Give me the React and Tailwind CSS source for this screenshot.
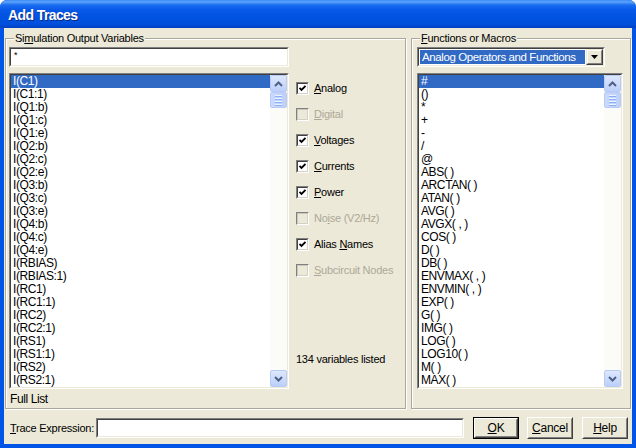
import React from "react";

const vars = [
  "I(C1)", "I(C1:1)", "I(Q1:b)", "I(Q1:c)", "I(Q1:e)", "I(Q2:b)", "I(Q2:c)", "I(Q2:e)",
  "I(Q3:b)", "I(Q3:c)", "I(Q3:e)", "I(Q4:b)", "I(Q4:c)", "I(Q4:e)", "I(RBIAS)", "I(RBIAS:1)",
  "I(RC1)", "I(RC1:1)", "I(RC2)", "I(RC2:1)", "I(RS1)", "I(RS1:1)", "I(RS2)", "I(RS2:1)",
];

const funcs = [
  "#", "()", "*", "+", "-", "/", "@", "ABS( )", "ARCTAN( )", "ATAN( )", "AVG( )", "AVGX( , )",
  "COS( )", "D( )", "DB( )", "ENVMAX( , )", "ENVMIN( , )", "EXP( )", "G( )", "IMG( )",
  "LOG( )", "LOG10( )", "M( )", "MAX( )",
];

function Sunken({ className = "", children }) {
  return (
    <div className={"border border-t-[#808080] border-l-[#808080] border-b-white border-r-white " + className}>
      <div className="w-full h-full border border-t-[#404040] border-l-[#404040] border-b-[#ece9d8] border-r-[#ece9d8] bg-white">
        {children}
      </div>
    </div>
  );
}

function ScrollBtn({ down }) {
  return (
    <div className="h-[17px] w-[17px] rounded-[2px] border border-[#b9cbf3] bg-[linear-gradient(to_bottom,#dde7fe,#bccffb)] flex items-center justify-center">
      <svg width="9" height="6" viewBox="0 0 9 6">
        <path
          d={down ? "M1 1 L4.5 4.5 L8 1" : "M1 5 L4.5 1.5 L8 5"}
          fill="none"
          stroke="#4d6185"
          strokeWidth="2"
        />
      </svg>
    </div>
  );
}

function ScrollBar() {
  return (
    <div className="w-[17px] h-full flex flex-col bg-[#fbfbf8]">
      <ScrollBtn />
      <div className="h-[16px] w-[17px] rounded-[2px] border border-[#b9cbf3] bg-[linear-gradient(to_right,#c9d9ff,#bdd0fb)] flex flex-col items-center justify-center gap-[1px]">
        <div className="w-[7px] h-[2px] bg-[#eef4fe] border-b border-[#8cb0f8]" />
        <div className="w-[7px] h-[2px] bg-[#eef4fe] border-b border-[#8cb0f8]" />
        <div className="w-[7px] h-[2px] bg-[#eef4fe] border-b border-[#8cb0f8]" />
        <div className="w-[7px] h-[2px] bg-[#eef4fe] border-b border-[#8cb0f8]" />
      </div>
      <div className="flex-1" />
      <ScrollBtn down />
    </div>
  );
}

function ListBox({ items, className }) {
  return (
    <Sunken className={className}>
      <div className="flex h-full">
        <div className="flex-1 overflow-hidden">
          {items.map((it, i) => (
            <div
              key={i}
              className={
                "h-[13px] leading-[13px] pl-[2px] whitespace-pre text-[12px] tracking-[-0.4px] " +
                (i === 0 ? "bg-[#316ac5] text-white" : "text-black")
              }
            >
              {it}
            </div>
          ))}
        </div>
        <ScrollBar />
      </div>
    </Sunken>
  );
}

function Check({ checked, disabled, children }) {
  return (
    <div className="h-[26px] flex items-center">
      <div className="w-[13px] h-[13px] border border-t-[#808080] border-l-[#808080] border-b-white border-r-white">
        <div
          className={
            "w-full h-full border border-b-[#d4d0c8] border-r-[#d4d0c8] flex items-center justify-center " +
            (disabled ? "bg-[#ece9d8] border-t-[#c9c6b8] border-l-[#c9c6b8]" : "bg-white border-t-[#404040] border-l-[#404040]")
          }
        >
          {checked && (
            <svg width="7" height="7" viewBox="0 0 7 7">
              <path d="M0.5 3 L2.5 5 L6.5 1" fill="none" stroke="#000" strokeWidth="1.8" />
            </svg>
          )}
        </div>
      </div>
      <span className={"ml-[5px] " + (disabled ? "text-[#aca899]" : "text-black")}>{children}</span>
    </div>
  );
}

function Btn({ def, children }) {
  return (
    <div className={"h-[22px] w-[46px] " + (def ? "border border-black" : "")}>
      <div className="h-full w-full border border-t-white border-l-white border-b-[#404040] border-r-[#404040] bg-[#ece9d8]">
        <div className="h-full w-full border border-t-[#ece9d8] border-l-[#ece9d8] border-b-[#808080] border-r-[#808080] flex items-center justify-center text-[12px]">
          {children}
        </div>
      </div>
    </div>
  );
}

function GroupBox({ label, className, children }) {
  return (
    <div className={"relative border border-[#aca899] shadow-[inset_1px_1px_0_#fff,1px_1px_0_#fff] " + className}>
      <span className="absolute -top-[8px] left-[8px] px-[1px] bg-[#ece9d8] leading-[14px]">{label}</span>
      {children}
    </div>
  );
}

export default function App() {
  return (
    <div className="w-[636px] h-[448px] bg-[#0055e6] rounded-t-[7px] flex flex-col overflow-hidden font-['Liberation_Sans',Arial,sans-serif] text-[11px] text-black tracking-[-0.25px]">
      <div className="h-[28px] shrink-0 flex items-center pl-[8px] pt-[3px] bg-[linear-gradient(to_bottom,#3a8cf8_0px,#5ea2fc_2px,#1a6cf0_5px,#0858e8_10px,#0152e0_18px,#0050dc_24px,#0141c4_28px)]">
        <span className="text-white font-bold text-[14px] [text-shadow:1px_1px_#0a2a86] tracking-[-0.6px]">
          Add Traces
        </span>
      </div>
      <div className="flex-1 mx-[4px] mb-[4px] bg-[#ece9d8] flex flex-col pl-[1px] pt-[10px]">
        <div className="flex">
          <GroupBox
            className="w-[401px] h-[371px] flex"
            label={
              <>
                Si<span className="underline">m</span>ulation Output Variables
              </>
            }
          >
            <div className="ml-[3px] pt-[8px] w-[280px] flex flex-col">
              <Sunken className="h-[20px] w-[280px]">
                <div className="pl-[3px] text-[9px] leading-[12px]">*</div>
              </Sunken>
              <ListBox items={vars} className="mt-[6px] h-[316px] w-[280px]" />
              <div className="mt-[4px] leading-[13px] pl-[1px] text-[12px] tracking-[-0.4px]">Full List</div>
            </div>
            <div className="ml-[7px] pt-[36px] flex flex-col">
              <Check checked>
                <span className="underline">A</span>nalog
              </Check>
              <Check disabled>
                <span className="underline">D</span>igital
              </Check>
              <Check checked>
                <span className="underline">V</span>oltages
              </Check>
              <Check checked>
                <span className="underline">C</span>urrents
              </Check>
              <Check checked>
                <span className="underline">P</span>ower
              </Check>
              <Check disabled>
                No<span className="underline">i</span>se (V2/Hz)
              </Check>
              <Check checked>
                Alias <span className="underline">N</span>ames
              </Check>
              <Check disabled>
                <span className="underline">S</span>ubcircuit Nodes
              </Check>
              <div className="mt-[70px] leading-[13px]">134 variables listed</div>
            </div>
          </GroupBox>
          <GroupBox
            className="ml-[5px] w-[220px] h-[371px] flex flex-col pl-[5px] pt-[8px]"
            label={
              <>
                <span className="underline">F</span>unctions or Macros
              </>
            }
          >
            <Sunken className="h-[20px] w-[188px]">
              <div className="flex h-full">
                <div className="flex-1 m-[1px] bg-[#316ac5] text-white pl-[2px] leading-[14px] text-[11.5px] tracking-[-0.4px]">
                  Analog Operators and Functions
                </div>
                <div className="w-[17px] border border-t-[#ece9d8] border-l-[#ece9d8] border-b-[#404040] border-r-[#404040] bg-[#ece9d8]">
                  <div className="h-full border border-t-white border-l-white border-b-[#808080] border-r-[#808080] flex items-center justify-center">
                    <svg width="7" height="4" viewBox="0 0 7 4">
                      <path d="M0 0 H7 L3.5 4 Z" fill="#000" />
                    </svg>
                  </div>
                </div>
              </div>
            </Sunken>
            <ListBox items={funcs} className="mt-[6px] h-[316px] w-[206px]" />
          </GroupBox>
        </div>
        <div className="mt-[8px] flex items-center pl-[5px]">
          <span className="w-[86px] text-[11px]">
            <span className="underline">T</span>race Expression:
          </span>
          <Sunken className="h-[20px] w-[368px]" />
          <div className="ml-[9px]">
            <Btn def>
              <span className="underline">O</span>K
            </Btn>
          </div>
          <div className="ml-[8px]">
            <Btn>
              <span className="underline">C</span>ancel
            </Btn>
          </div>
          <div className="ml-[9px]">
            <Btn>
              <span className="underline">H</span>elp
            </Btn>
          </div>
        </div>
      </div>
    </div>
  );
}
